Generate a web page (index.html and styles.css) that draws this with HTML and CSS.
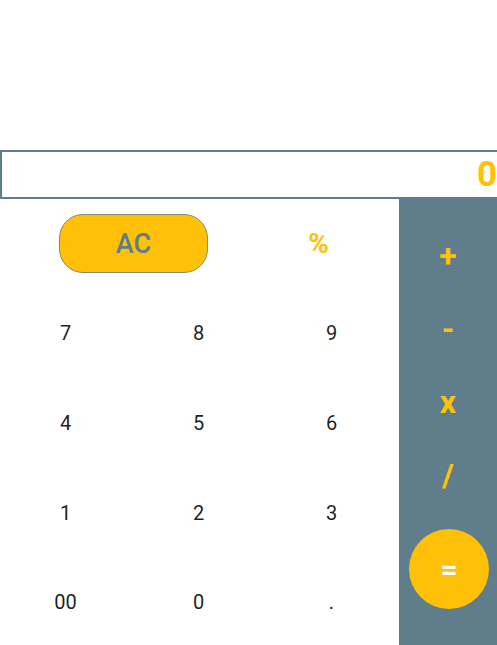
FILE: index.html
```html
<!DOCTYPE html>
<html>
<head>
<meta charset="utf-8">
<link rel="stylesheet" href="styles.css">
</head>
<body>
<div class="calc">
  <div class="top"></div>
  <div class="display">0</div>
  <div class="pad">
    <div class="keys">
      <div class="key key-ac"><span class="ac">AC</span></div>
      <div class="key key-pct">%</div>
      <div class="key">7</div>
      <div class="key">8</div>
      <div class="key">9</div>
      <div class="key">4</div>
      <div class="key">5</div>
      <div class="key">6</div>
      <div class="key">1</div>
      <div class="key">2</div>
      <div class="key">3</div>
      <div class="key">00</div>
      <div class="key">0</div>
      <div class="key">.</div>
    </div>
    <div class="ops">
      <div class="op">+</div>
      <div class="op">-</div>
      <div class="op">x</div>
      <div class="op">/</div>
      <div class="eq">=</div>
    </div>
  </div>
</div>
</body>
</html>
```
FILE: styles.css
```css
html, body {
  margin: 0;
  padding: 0;
  background: #fff;
  overflow: hidden;
}
body {
  font-family: Roboto, "Noto Sans", sans-serif;
  width: 497px;
  height: 645px;
}
.calc {
  width: 497px;
}
.top {
  height: 150px;
}
.display {
  box-sizing: border-box;
  width: 520px;
  height: 49px;
  border: 2px solid #607d8b;
  padding-right: 21px;
  text-align: right;
  font-size: 35px;
  font-weight: 700;
  color: #ffc107;
  line-height: 45px;
}
.pad {
  display: flex;
  height: 446px;
}
.keys {
  width: 399px;
  display: grid;
  grid-template-columns: repeat(3, 133px);
  grid-template-rows: repeat(5, 89.6px);
}
.key {
  display: flex;
  align-items: center;
  justify-content: center;
  font-size: 20px;
  color: #1f1f1f;
  padding-right: 2px;
}
.key-ac {
  grid-column: span 2;
  padding-right: 0;
}
.ac {
  box-sizing: border-box;
  width: 149px;
  height: 59px;
  border-radius: 24px;
  background: #ffc107;
  border: 1px solid #8a8b6f;
  display: flex;
  align-items: center;
  justify-content: center;
  color: #607d8b;
  font-size: 27px;
  font-weight: 500;
  margin-left: 1px;
}
.key-pct {
  color: #ffc107;
  font-size: 28px;
  font-weight: 700;
  padding-right: 28px;
}
.ops {
  width: 98px;
  background: #607d8b;
  display: flex;
  flex-direction: column;
  align-items: center;
  padding-top: 20px;
  box-sizing: border-box;
}
.op {
  height: 73px;
  width: 100%;
  display: flex;
  align-items: center;
  justify-content: center;
  color: #ffc107;
  font-size: 32px;
  font-weight: 700;
}
.eq {
  margin-top: 18px;
  margin-left: 2px;
  width: 80px;
  height: 80px;
  border-radius: 50%;
  background: #ffc107;
  color: #fff;
  font-size: 30px;
  font-weight: 700;
  display: flex;
  align-items: center;
  justify-content: center;
}
```
